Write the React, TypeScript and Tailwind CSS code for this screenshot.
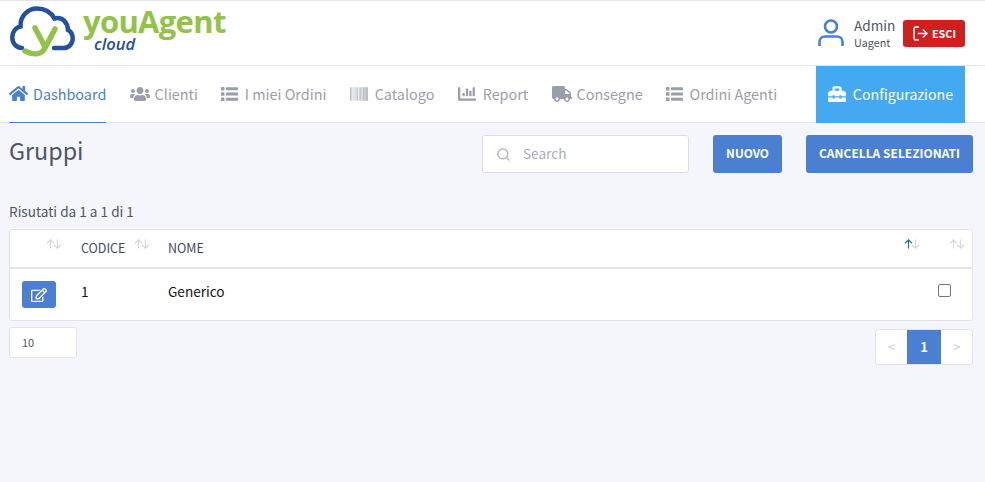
import React from "react";
import { FaHome, FaUsers, FaBarcode, FaChartBar, FaTruck, FaToolbox, FaRegEdit } from "react-icons/fa";
import { FiLogOut, FiSearch } from "react-icons/fi";

const font = { fontFamily: '"Noto Sans CJK SC", "Noto Sans", sans-serif' };

function Sort({ active = false }: { active?: boolean }) {
  return (
    <svg width="16" height="10" viewBox="0 0 16 10" fill="none" strokeWidth="1.2">
      <path d="M4.5 9.5V1M1 4.2 4.5 .8 8 4.2" stroke={active ? "#2c6f7f" : "#d5d7dc"} />
      <path d="M11.5 .5V9M8 5.8 11.5 9.2 15 5.8" stroke="#d5d7dc" />
    </svg>
  );
}

function ListIcon() {
  return (
    <svg width="17" height="14" viewBox="0 0 17 14" fill="currentColor">
      <rect x="0" y="0" width="3.500" height="3.500" rx=".6" />
      <rect x="5" y=".3" width="12" height="3" rx=".6" />
      <rect x="0" y="5.250" width="3.500" height="3.500" rx=".6" />
      <rect x="5" y="5.500" width="12" height="3" rx=".6" />
      <rect x="0" y="10.500" width="3.500" height="3.500" rx=".6" />
      <rect x="5" y="10.800" width="12" height="3" rx=".6" />
    </svg>
  );
}

function NavItem({ icon, label, active = false, gap = "gap-[7px]" }: { icon: React.ReactNode; label: string; active?: boolean; gap?: string }) {
  return (
    <div className={`flex h-[57px] shrink-0 items-center whitespace-nowrap border-b-1 text-[14.400px] ${gap} ${active ? "border-[#4a7fd1] text-[#4a7fd1]" : "border-transparent text-[#9a9eac]"}`}>
      {icon}
      <span>{label}</span>
    </div>
  );
}

function Logo() {
  return (
    <div className="flex h-[64px] w-[240px] items-start">
      <svg width="68" height="54" viewBox="0 0 68 54" className="ml-[9px] mt-[4px] shrink-0" fill="none">
        <path d="M13 43C7 43 3.300 38 3.300 32.500C3.300 26.500 7 22.500 11.500 21.500C11 11 19 3.500 28 3.500C36 3.500 42 7.500 45.500 13.500C53.500 11.500 58.500 17.500 59 25C62 26.500 63.700 30 63.700 33.500C63.700 39 59.500 43 54.500 43H45" stroke="#24509f" strokeWidth="4.500" strokeLinecap="round" />
        <path d="M26 23 35 40" stroke="#93c24a" strokeWidth="5.500" strokeLinecap="round" />
        <path d="M46 24 36 43C33 49 26 51 16 46" stroke="#93c24a" strokeWidth="5.500" strokeLinecap="round" />
      </svg>
      <div className="ml-[6px] flex flex-col" style={{ fontFamily: '"Open Sans", sans-serif' }}>
        <span className="mt-[6px] text-[31px] font-bold leading-[28px] tracking-[-0.7px] text-[#93c24a]">youAgent</span>
        <span className="ml-[11px] text-[16.500px] font-semibold italic leading-[18px] text-[#24509f]">cloud</span>
      </div>
    </div>
  );
}

export default function App() {
  return (
    <div className="flex h-[482px] w-[985px] flex-col overflow-hidden bg-[#f4f6fb]" style={font}>
      <header className="flex h-[66px] shrink-0 items-center justify-between border-y-1 border-y-[#e2e4e8] bg-white pr-[20px]">
        <Logo />
        <div className="flex items-center">
          <svg width="28" height="30" viewBox="0 0 28 30" fill="none" stroke="#4a7fd1" strokeWidth="2.600">
            <circle cx="14" cy="8.500" r="6" />
            <path d="M2.500 28V24C2.500 20.500 5 18.500 8 18.500H20C23 18.500 25.500 20.500 25.500 24V28" />
          </svg>
          <div className="ml-[9px] flex w-[49px] flex-col text-[#4e5665]">
            <span className="text-[13.600px] leading-[18px]">Admin</span>
            <span className="text-[10.800px] leading-[16px]">Uagent</span>
          </div>
          <button className="flex h-[27px] w-[62px] items-center justify-center gap-[3px] rounded-[3px] bg-[#cf1f1f] text-[10.800px] font-bold text-white">
            <FiLogOut size={17} strokeWidth={2.200} />
            ESCI
          </button>
        </div>
      </header>

      <nav className="flex h-[57px] shrink-0 items-center justify-between border-b-1 border-b-[#e2e7f1] bg-white pl-[9px] pr-[20px]">
        <div className="flex gap-[23.300px]">
          <NavItem active label="Dashboard" gap="gap-[5px]" icon={<FaHome size={19} />} />
          <NavItem label="Clienti" gap="gap-[5px]" icon={<FaUsers size={20} />} />
          <NavItem label="I miei Ordini" gap="gap-[6.500px]" icon={<ListIcon />} />
          <NavItem label="Catalogo" icon={<FaBarcode size={18} />} />
          <NavItem label="Report" icon={<FaChartBar size={18} />} />
          <NavItem label="Consegne" gap="gap-[5px]" icon={<FaTruck size={20} />} />
          <NavItem label="Ordini Agenti" gap="gap-[6.500px]" icon={<ListIcon />} />
        </div>
        <div className="flex h-[57px] w-[149px] shrink-0 items-center justify-center gap-[7px] whitespace-nowrap bg-[#45a9f1] text-[14.200px] text-white">
          <FaToolbox size={18} />
          <span className="pt-[1px]">Configurazione</span>
        </div>
      </nav>

      <main className="flex flex-col pl-[9px] pr-[12px]">
        <div className="mt-[12px] flex items-start">
          <h1 className="text-[23.300px] font-normal leading-[30px] text-[#4e5665]">Gruppi</h1>
          <div className="ml-auto flex h-[38px] w-[207px] items-center rounded-[3px] border-1 border-[#d9deea] bg-white pl-[13px] text-[13.600px] text-[#a9adb8]">
            <FiSearch size={15} />
            <span className="mb-[2px] ml-[12px]">Search</span>
          </div>
          <button className="ml-[24px] h-[38px] w-[69px] rounded-[3px] bg-[#4a7fd1] pb-[2px] text-[11.800px] font-bold text-white">NUOVO</button>
          <button className="ml-[24px] h-[38px] w-[167px] rounded-[3px] bg-[#4a7fd1] pb-[2px] text-[12px] font-bold text-white">CANCELLA SELEZIONATI</button>
        </div>

        <p className="mt-[28px] text-[13.600px] leading-[20px] text-[#4e5665]">Risutati da 1 a 1 di 1</p>

        <div className="mt-[8px] rounded-[3px] border-1 border-[#e2e4e8] bg-white">
          <div className="flex h-[39px] items-start border-b-2 border-b-[#e2e4e8] text-[12.500px] text-[#3f4a5f]">
            <div className="flex w-[71px] shrink-0 justify-end pr-[19px] pt-[9px]"><Sort /></div>
            <div className="flex w-[87px] shrink-0 pt-[9px]">
              <span className="leading-[18px]">CODICE</span>
              <span className="ml-[9px]"><Sort /></span>
            </div>
            <div className="flex-1 pt-[9px] leading-[18px]">NOME</div>
            <div className="pr-[29px] pt-[9px]"><Sort active /></div>
            <div className="pr-[7px] pt-[9px]"><Sort /></div>
          </div>
          <div className="flex h-[51px] items-center text-[13.600px] text-[#111]">
            <div className="w-[71px] shrink-0 pl-[12px]">
              <button className="flex h-[27px] w-[34px] items-center justify-center rounded-[3px] bg-[#4a7fd1] text-white"><FaRegEdit size={16} /></button>
            </div>
            <div className="mb-[6px] w-[87px] shrink-0">1</div>
            <div className="mb-[6px] flex-1">Generico</div>
            <div className="mb-[9px] mr-[21px] h-[13px] w-[13px] rounded-[2px] border-1 border-[#767676] bg-white" />
          </div>
        </div>

        <div className="mt-[6px] flex items-start justify-between">
          <div className="flex h-[31px] w-[68px] items-center rounded-[3px] border-1 border-[#e2e4e8] bg-white pl-[12px] text-[11px] text-[#4e5665]">10</div>
          <div className="mt-[2px] flex h-[36px] overflow-hidden rounded-[3px] border-1 border-[#e2e4e8] bg-white text-[13px]">
            <div className="flex w-[31px] items-center justify-center text-[#c9ccd3]">&lt;</div>
            <div className="flex w-[34px] items-center justify-center bg-[#4a7fd1] font-bold text-white">1</div>
            <div className="flex w-[31px] items-center justify-center text-[#c9ccd3]">&gt;</div>
          </div>
        </div>
      </main>
    </div>
  );
}
